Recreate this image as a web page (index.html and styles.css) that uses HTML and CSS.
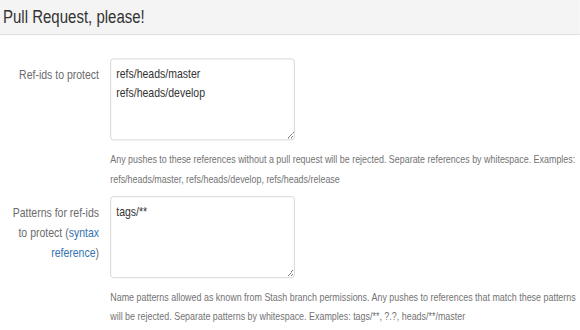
FILE: index.html
```html
<!DOCTYPE html>
<html lang="en">
<head>
  <meta charset="UTF-8" />
  <title>Pull Request, please!</title>
  <link rel="stylesheet" href="styles.css">
</head>
<body>
  <div class="page">
    <div class="page-header">
      <h1>Pull Request, please!</h1>
    </div>

    <form class="settings-form">
      <div class="form-row">
        <label class="form-label" for="refIds">Ref-ids to protect</label>
        <div class="form-field">
          <textarea id="refIds">refs/heads/master
refs/heads/develop</textarea>
          <p class="help-text">Any pushes to these references without a pull request will be rejected. Separate references by whitespace. Examples: refs/heads/master, refs/heads/develop, refs/heads/release</p>
        </div>
      </div>

      <div class="form-row">
        <label class="form-label" for="patterns">Patterns for ref-ids to protect (<a href="#">syntax reference</a>)</label>
        <div class="form-field">
          <textarea id="patterns">tags/**</textarea>
          <p class="help-text">Name patterns allowed as known from Stash branch permissions. Any pushes to references that match these patterns will be rejected. Separate patterns by whitespace. Examples: tags/**, ?.?, heads/**/master</p>
        </div>
      </div>
    </form>
  </div>
</body>
</html>
```

FILE: styles.css
```css
html, body {
  margin: 0;
  overflow: hidden;
}

body {
  font-family: 'Liberation Sans', Arial, sans-serif;
  color: #333;
  background: #fff;
}

/* the whole page is drawn a bit condensed */
.page {
  width: 773px;
  transform: scale(0.75, 0.9);
  transform-origin: 0 0;
}

.page-header {
  background-color: #f4f4f4;
  border-bottom: 1px solid #dcdcdc;
  height: 38px;
  padding: 0 4px;
}

.page-header h1 {
  margin: 0;
  font-size: 20px;
  font-weight: 400;
  line-height: 38px;
  color: #333;
}

.settings-form {
  padding-top: 26px;
}

.form-row {
  display: flex;
  margin-bottom: 8px;
}

.form-label {
  flex: 0 0 132px;
  box-sizing: border-box;
  padding: 7px 0 0 12px;
  margin-right: 15px;
  text-align: right;
  font-size: 14px;
  line-height: 22px;
  color: #6b6b6b;
}

.form-label a {
  color: #3572b0;
  text-decoration: none;
}

.form-field {
  flex: 1;
  min-width: 0;
}

textarea {
  display: block;
  width: 246px;
  height: 91px;
  box-sizing: border-box;
  margin: 0;
  padding: 6px 7px;
  border: 1px solid #cfcfcf;
  border-radius: 4px;
  font-family: inherit;
  font-size: 14px;
  line-height: 21px;
  color: #333;
  resize: vertical;
}

.help-text {
  margin: 10px 0 0;
  font-size: 11.9px;
  line-height: 22px;
  color: #737373;
}
```
